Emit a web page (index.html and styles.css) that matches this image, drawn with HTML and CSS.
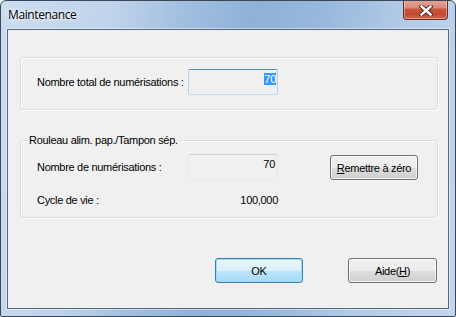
FILE: index.html
```html
<!DOCTYPE html>
<html lang="fr">
<head>
  <meta charset="UTF-8">
  <title>Maintenance</title>
  <link rel="stylesheet" href="styles.css">
</head>
<body>
  <div class="window">
    <div class="titlebar">
      <span class="title">Maintenance</span>
      <div class="close-btn">
        <svg width="14" height="11" viewBox="0 0 14 11">
          <path d="M2.5 1.5 L11.5 9.5 M11.5 1.5 L2.5 9.5" stroke="#5b2a22" stroke-width="4.4" stroke-linecap="square" fill="none"/>
          <path d="M2.5 1.5 L11.5 9.5 M11.5 1.5 L2.5 9.5" stroke="#fff" stroke-width="2.4" stroke-linecap="square" fill="none"/>
        </svg>
      </div>
    </div>

    <div class="client">
      <!-- compteur total -->
      <div class="group group-total">
        <div class="row">
          <span class="lbl">Nombre total de numérisations :</span>
          <div class="field focused"><span class="sel">70</span></div>
        </div>
      </div>

      <!-- rouleau -->
      <div class="group group-roll">
        <span class="legend">Rouleau alim. pap./Tampon sép.</span>
        <div class="row">
          <span class="lbl">Nombre de numérisations :</span>
          <div class="field">70</div>
          <button class="btn btn-reset"><u>R</u>emettre à zéro</button>
        </div>
        <div class="row row-life">
          <span class="lbl">Cycle de vie :</span>
          <span class="val">100,000</span>
        </div>
      </div>

      <div class="actions">
        <button class="btn btn-default btn-ok">OK</button>
        <button class="btn btn-help">Aide(<u>H</u>)</button>
      </div>
    </div>
  </div>
</body>
</html>
```

FILE: styles.css
```css
* { margin:0; padding:0; box-sizing:border-box; }
body { width:456px; height:317px; overflow:hidden; background:#fff; font-family:"Liberation Sans", Arial, sans-serif; font-size:11px; letter-spacing:-0.3px; color:#000; }

/* Window frame (Aero) */
.window { position:relative; width:456px; height:317px; display:flex; flex-direction:column; border:1px solid #3b4756; border-radius:6px 6px 2px 2px; overflow:hidden;
  background: linear-gradient(100deg, #cadcef 0%, #bfd4eb 22%, #a2bfdf 36%, #8fb1d8 50%, #98b8dc 64%, #b3cbe7 80%, #c3d7ee 100%); }
.titlebar { height:28px; flex:none; padding:5px 0 0 7px; }
.title { font-family:"Open Sans", "Noto Sans", sans-serif; font-size:12px; letter-spacing:-0.4px; color:#000; text-shadow:0 0 6px #fff, 0 0 3px #fff; }
.close-btn { position:absolute; top:-1px; right:7px; width:45px; height:20px; display:flex; justify-content:center; align-items:center; border:1px solid #6a2d22; border-top:none; border-radius:0 0 4px 4px;
  background: linear-gradient(#e7a596 0%, #d98a79 40%, #c6533d 50%, #c24a33 75%, #d2694d 100%); box-shadow: inset 0 0 0 1px rgba(255,255,255,0.35); }
.close-btn svg { margin-left:1px; margin-top:1px; }

/* Client area */
.client { flex:1; margin:0 6px 7px; border:1px solid #56687b; background:#f0f0f0; padding:27px 10px 0 12px; box-shadow:0 0 0 1px rgba(255,255,255,0.45); }

/* Group boxes */
.group { position:relative; border:1px solid #d5dfe5; border-radius:3px; padding-left:16px; box-shadow: inset 1px 1px 0 #fff, 1px 1px 0 #fff; }
.group-total { padding-top:11px; padding-bottom:14px; }
.group-roll { margin-top:30px; padding-top:12px; padding-bottom:10px; }
.legend { position:absolute; top:-7px; left:7px; padding:0 1px; line-height:13px; background:#f0f0f0; }

.row { display:grid; grid-template-columns:151px 90px auto; align-items:center; }
.row-life { margin-top:14px; line-height:13px; }
.val { text-align:right; padding-right:0; }

/* Text fields (read only) */
.field { height:26px; border:1px solid; border-color:#cdd3d9 #e3e6ea #e8ebee #e3e6ea; border-radius:2px; text-align:right; padding:3px 2px 0 0; line-height:13px; }
.field.focused { border-color:#5f8db9 #b5d0e8 #c5dcef #b5d0e8; padding-right:1px; }
.sel { background:#3399ff; color:#fff; }

/* Buttons */
.btn { height:25px; border:1px solid #707070; border-radius:3px; font:inherit; letter-spacing:-0.3px; color:#000; text-align:center;
  background: linear-gradient(#f2f2f2 0%, #ebebeb 50%, #dddddd 50%, #cfcfcf 100%); box-shadow: inset 0 0 0 1px rgba(255,255,255,0.75); }
.btn u { text-decoration:underline; }
.btn-reset { width:88px; margin-left:52px; align-self:start; margin-top:2px; }
.btn-default { border-color:#3c7fb1; background: linear-gradient(#eaf6fd 0%, #d9f0fc 50%, #bee6fd 50%, #a7d9f5 100%); box-shadow: inset 0 0 0 1px #9fdcf7; }

.actions { display:flex; justify-content:flex-end; gap:45px; margin-top:40px; padding-right:1px; }
.btn-ok { width:88px; }
.btn-help { width:89px; }
```
